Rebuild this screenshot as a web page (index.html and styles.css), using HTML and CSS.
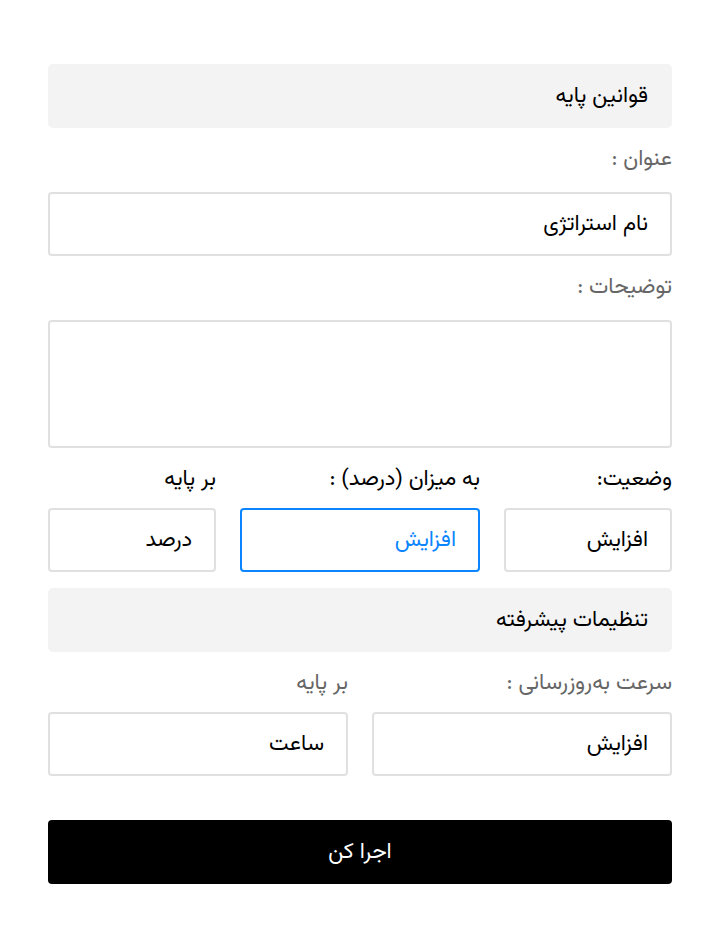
FILE: index.html
```html
<!DOCTYPE html>
<html lang="fa" dir="rtl">
<head>
    <meta charset="UTF-8">
    <meta name="viewport" content="width=device-width, initial-scale=1.0">
    <title>قوانین استراتژی</title>
    <link rel="stylesheet" href="styles.css">
</head>
<body>

<form class="strategy-form">
    <!-- Basic rules -->
    <div class="section-title">قوانین پایه</div>

    <label class="field-label">عنوان :</label>
    <div class="field">نام استراتژی</div>

    <label class="field-label">توضیحات :</label>
    <div class="field field-area"></div>

    <div class="row row-three">
        <div class="col">
            <label class="row-label">وضعیت:</label>
            <div class="field">افزایش</div>
        </div>
        <div class="col">
            <label class="row-label">به میزان (درصد) :</label>
            <div class="field field-active">افزایش</div>
        </div>
        <div class="col">
            <label class="row-label">بر پایه</label>
            <div class="field">درصد</div>
        </div>
    </div>

    <!-- Advanced settings -->
    <div class="section-title">تنظیمات پیشرفته</div>

    <div class="row row-two">
        <div class="col">
            <label class="row-label muted">سرعت به‌روزرسانی :</label>
            <div class="field">افزایش</div>
        </div>
        <div class="col">
            <label class="row-label muted">بر پایه</label>
            <div class="field">ساعت</div>
        </div>
    </div>

    <button type="button" class="submit-btn">اجرا کن</button>
</form>

</body>
</html>
```

FILE: styles.css
```css
body {
    margin: 0;
    background: #fff;
    font-family: "Vazirmatn", "Noto Sans Arabic", "DejaVu Sans", sans-serif;
    color: #000;
}

.strategy-form {
    width: 624px;
    margin: 0 auto;
    padding: 64px 0;
    display: flex;
    flex-direction: column;
}

/* Grey section headers */
.section-title {
    height: 64px;
    background-color: #f3f3f3;
    border-radius: 5px;
    padding: 0 24px;
    display: flex;
    align-items: center;
    font-size: 22px;
}

.field-label {
    display: block;
    height: 32px;
    line-height: 32px;
    margin: 16px 0;
    font-size: 22px;
    color: #666;
}

.field {
    box-sizing: border-box;
    height: 64px;
    border: 2px solid #e0e0e0;
    border-radius: 4px;
    padding: 0 22px;
    display: flex;
    align-items: center;
    font-size: 22px;
}

.field-area {
    height: 128px;
}

.field-active {
    border-color: #0a84ff;
    color: #0a84ff;
}

.row {
    display: grid;
    gap: 24px;
    margin-top: 16px;
    margin-bottom: 16px;
}

.row-three {
    grid-template-columns: 168px 240px 168px;
}

.row-two {
    grid-template-columns: 1fr 1fr;
}

.row-label {
    display: block;
    height: 32px;
    line-height: 32px;
    margin-bottom: 12px;
    font-size: 22px;
}

.muted {
    color: #666;
}

.submit-btn {
    margin-top: 28px;
    height: 64px;
    border: none;
    border-radius: 4px;
    background: #000;
    color: #fff;
    font-family: inherit;
    font-size: 22px;
}
```
